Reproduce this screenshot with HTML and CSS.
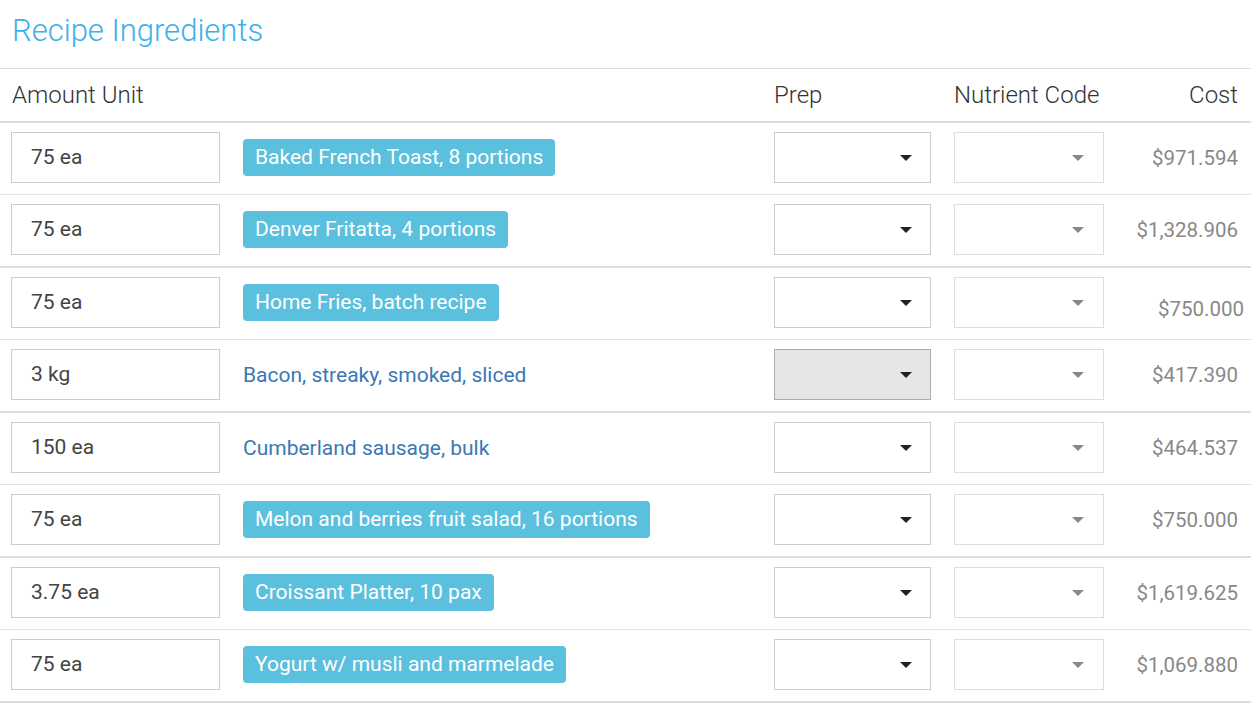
FILE: index.html
```html
<!DOCTYPE html>
<html lang="en">
<head>
    <meta charset="UTF-8">
    <title>Recipe Ingredients</title>
    <link rel="stylesheet" href="styles.css">
</head>
<body>
    <h2 class="title">Recipe Ingredients</h2>
    <table class="ingredients">
        <colgroup>
            <col class="col-amount">
            <col class="col-name">
            <col class="col-prep">
            <col class="col-nutrient">
            <col class="col-cost">
        </colgroup>
        <thead>
            <tr>
                <th>Amount Unit</th>
                <th></th>
                <th>Prep</th>
                <th>Nutrient Code</th>
                <th class="right">Cost</th>
            </tr>
        </thead>
        <tbody>
            <tr>
                <td><div class="amount">75 ea</div></td>
                <td><span class="recipe">Baked French Toast, 8 portions</span></td>
                <td><div class="select prep"><span class="caret"></span></div></td>
                <td><div class="select nutrient"><span class="caret"></span></div></td>
                <td class="cost">$971.594</td>
            </tr>
            <tr class="group-end">
                <td><div class="amount">75 ea</div></td>
                <td><span class="recipe">Denver Fritatta, 4 portions</span></td>
                <td><div class="select prep"><span class="caret"></span></div></td>
                <td><div class="select nutrient"><span class="caret"></span></div></td>
                <td class="cost">$1,328.906</td>
            </tr>
            <tr>
                <td><div class="amount">75 ea</div></td>
                <td><span class="recipe">Home Fries, batch recipe</span></td>
                <td><div class="select prep"><span class="caret"></span></div></td>
                <td><div class="select nutrient"><span class="caret"></span></div></td>
                <td class="cost shifted">$750.000</td>
            </tr>
            <tr class="group-end">
                <td><div class="amount">3 kg</div></td>
                <td><a class="item" href="#">Bacon, streaky, smoked, sliced</a></td>
                <td><div class="select prep active"><span class="caret"></span></div></td>
                <td><div class="select nutrient"><span class="caret"></span></div></td>
                <td class="cost">$417.390</td>
            </tr>
            <tr>
                <td><div class="amount">150 ea</div></td>
                <td><a class="item" href="#">Cumberland sausage, bulk</a></td>
                <td><div class="select prep"><span class="caret"></span></div></td>
                <td><div class="select nutrient"><span class="caret"></span></div></td>
                <td class="cost">$464.537</td>
            </tr>
            <tr class="group-end">
                <td><div class="amount">75 ea</div></td>
                <td><span class="recipe">Melon and berries fruit salad, 16 portions</span></td>
                <td><div class="select prep"><span class="caret"></span></div></td>
                <td><div class="select nutrient"><span class="caret"></span></div></td>
                <td class="cost">$750.000</td>
            </tr>
            <tr>
                <td><div class="amount">3.75 ea</div></td>
                <td><span class="recipe">Croissant Platter, 10 pax</span></td>
                <td><div class="select prep"><span class="caret"></span></div></td>
                <td><div class="select nutrient"><span class="caret"></span></div></td>
                <td class="cost">$1,619.625</td>
            </tr>
            <tr class="group-end">
                <td><div class="amount">75 ea</div></td>
                <td><span class="recipe">Yogurt w/ musli and marmelade</span></td>
                <td><div class="select prep"><span class="caret"></span></div></td>
                <td><div class="select nutrient"><span class="caret"></span></div></td>
                <td class="cost">$1,069.880</td>
            </tr>
        </tbody>
    </table>
</body>
</html>
```

FILE: styles.css
```css
body {
    font-family: Roboto, "Liberation Sans", sans-serif;
    margin: 0;
    padding: 0;
    background-color: #fff;
    color: #333;
}
.title {
    margin: 0;
    height: 69px;
    padding: 12px 12px 0;
    box-sizing: border-box;
    font-size: 31px;
    font-weight: 300;
    line-height: 37px;
    color: #3bb1ea;
    border-bottom: 1px solid #ddd;
}
.ingredients {
    width: 1251px;
    border-collapse: collapse;
    table-layout: fixed;
}
.col-amount { width: 231px; }
.col-name { width: 531px; }
.col-prep { width: 180px; }
.col-nutrient { width: 173px; }
.col-cost { width: 136px; }
th {
    height: 52px;
    padding: 0 12px;
    font-size: 24px;
    font-weight: 300;
    text-align: left;
    color: #333;
    border-bottom: 2px solid #ddd;
    vertical-align: middle;
}
th.right {
    text-align: right;
    padding-right: 13px;
}
td {
    height: 51px;
    padding: 9px 12px 11px 11px;
    vertical-align: middle;
    font-size: 21px;
}
td:nth-child(n+2) {
    padding-left: 12px;
}
tbody tr {
    border-bottom: 1px solid #e3e3e3;
}
tbody tr.group-end {
    border-bottom: 2px solid #ddd;
}
.amount {
    width: 209px;
    height: 51px;
    border: 1px solid #ccc;
    padding: 0 19px;
    box-sizing: border-box;
    line-height: 49px;
    color: #444;
}
.recipe {
    display: inline-block;
    background-color: #5bc0de;
    color: #fff;
    padding: 0 12px;
    height: 37px;
    line-height: 37px;
    border-radius: 4px;
}
.item {
    color: #3a78b5;
    text-decoration: none;
}
.select {
    position: relative;
    height: 51px;
    box-sizing: border-box;
    border: 1px solid #ccc;
    background: #fff;
}
.select.prep {
    width: 157px;
}
.select.prep.active {
    background: #e6e6e6;
    border-color: #adadad;
}
.select.nutrient {
    width: 150px;
    border-color: #ddd;
}
.caret {
    position: absolute;
    right: 18px;
    top: 22px;
    width: 0;
    height: 0;
    border-left: 6px solid transparent;
    border-right: 6px solid transparent;
    border-top: 6px solid #222;
}
.nutrient .caret {
    right: 19px;
    border-top-color: #888;
}
td.cost {
    text-align: right;
    color: #888;
    font-size: 20.5px;
    padding-right: 13px;
}
td.cost.shifted {
    padding-top: 15px;
    padding-bottom: 5px;
    padding-right: 7px;
}
```
